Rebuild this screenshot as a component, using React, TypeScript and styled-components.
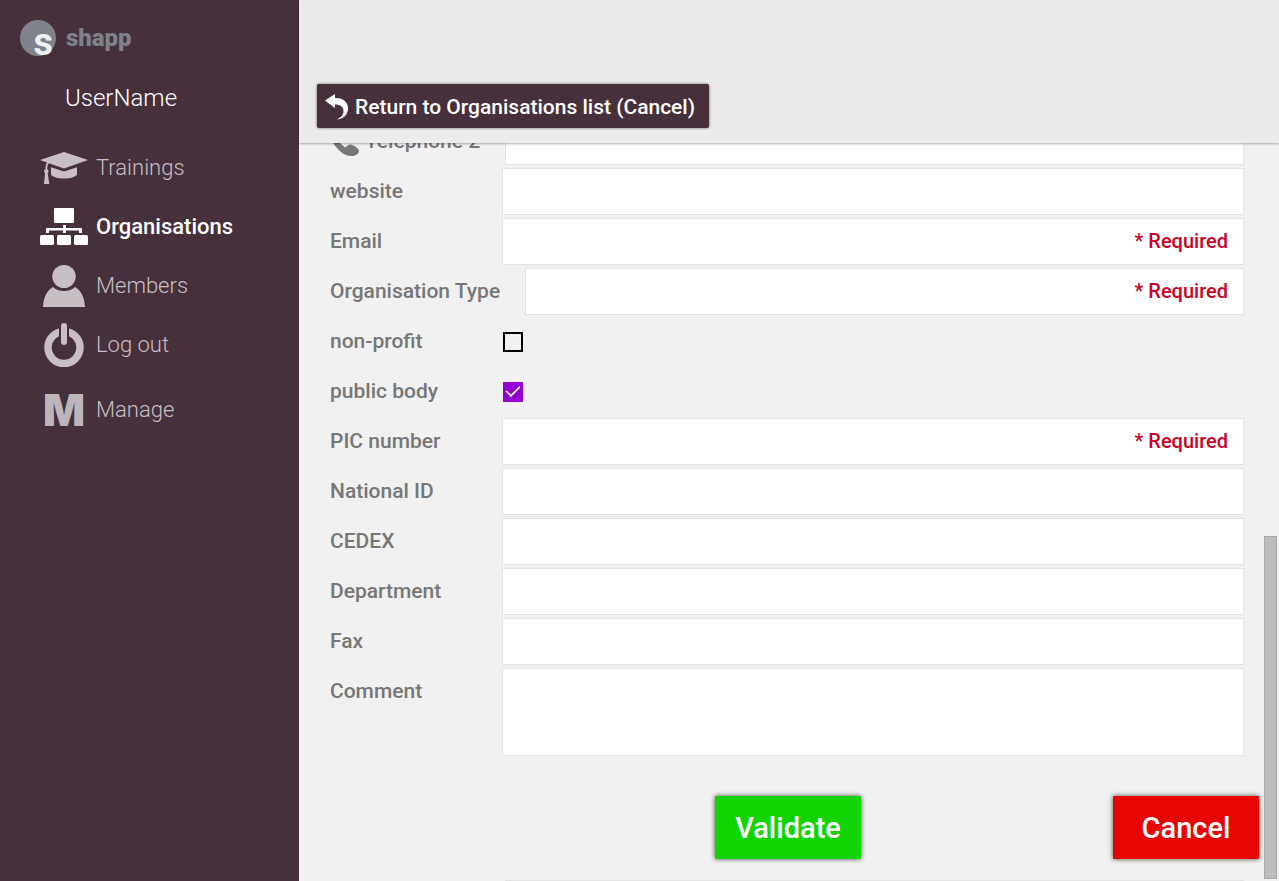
import React, { useLayoutEffect, useRef } from "react";
import styled, { createGlobalStyle } from "styled-components";

const GlobalStyle = createGlobalStyle`
  *, *::before, *::after { box-sizing: border-box; }
  body { margin: 0; font-family: Roboto, "Liberation Sans", sans-serif; }
`;

const Page = styled.div`
  display: flex;
  height: 100vh;
  background: #f1f1f1;
`;

const Sidebar = styled.aside`
  flex: 0 0 299px;
  padding-top: 20px;
  background: #46303b;
`;

const Brand = styled.a`
  display: flex;
  align-items: center;
  gap: 10px;
  height: 36px;
  padding-left: 20px;
  color: #7f8189;
  font-size: 24px;
  font-weight: 900;
  line-height: 32px;
  text-decoration: none;
`;

const BrandMark = styled.span`
  display: flex;
  align-items: flex-end;
  justify-content: flex-end;
  width: 36px;
  height: 36px;
  padding-right: 3px;
  border-radius: 50%;
  background: #80838c;
  color: #eef0f3;
  font-size: 38px;
  font-weight: 700;
  line-height: 28px;
`;

const UserName = styled.p`
  margin: 26px 0 24px 65px;
  color: #ffffff;
  font-size: 24px;
  font-weight: 300;
  line-height: 32px;
`;

const NavGroup = styled.ul`
  margin: 0 0 6px;
  padding: 0 0 0 40px;
  list-style: none;
`;

const NavLink = styled.a<{ $active?: boolean }>`
  display: flex;
  align-items: center;
  gap: 8px;
  height: 59px;
  color: ${(p) => (p.$active ? "#ffffff" : "#c7bfc3")};
  font-size: 22px;
  font-weight: ${(p) => (p.$active ? 500 : 300)};
  text-decoration: none;
`;

const NavIcon = styled.span`
  display: flex;
  justify-content: center;
  flex: 0 0 48px;
`;

const Monogram = styled.span`
  font-family: Inter, Roboto, sans-serif;
  font-size: 44px;
  font-weight: 900;
  line-height: 44px;
  color: #beb5ba;
`;

const Main = styled.main`
  flex: 1;
  min-width: 0;
  display: flex;
  flex-direction: column;
`;

const Header = styled.header`
  flex: 0 0 143px;
  display: flex;
  align-items: flex-end;
  padding: 0 18px 15px;
  background: #ebebeb;
  box-shadow: 0 1px 2px rgba(0, 0, 0, 0.3);
  z-index: 1;
`;

const ReturnButton = styled.button`
  display: flex;
  align-items: center;
  gap: 6px;
  height: 44px;
  padding: 2px 14px 0 8px;
  border: 0;
  border-radius: 2px;
  background: #46303b;
  box-shadow: 0 0 3px rgba(0, 0, 0, 0.6);
  color: #ffffff;
  font: 500 21px/24px Roboto, sans-serif;
`;

const Body = styled.div`
  flex: 1;
  min-height: 0;
  display: flex;
`;

const ScrollArea = styled.div`
  flex: 1;
  min-width: 0;
  overflow: hidden;
`;

const Track = styled.div`
  flex: 0 0 15px;
  display: flex;
  flex-direction: column;
  justify-content: flex-end;
  padding: 0 2px 2px 0;
`;

const Thumb = styled.div`
  height: 46.6%;
  border: 1px solid #a8a8a8;
  background: #bcbcbc;
`;

const Form = styled.form`
  display: flex;
  flex-direction: column;
  gap: 3px;
`;

const Row = styled.div<{ $labelWidth?: number }>`
  display: grid;
  grid-template-columns: ${(p) => p.$labelWidth ?? 172}px 1fr;
  min-height: 47px;
  padding: 0 20px 0 31px;
`;

const Label = styled.label`
  display: flex;
  align-items: center;
  gap: 6px;
  height: 47px;
  padding-bottom: 1px;
  color: #777777;
  font-size: 21px;
  font-weight: 500;
  line-height: 24px;
  white-space: nowrap;
`;

const FieldBox = styled.div`
  display: flex;
  align-items: center;
  border: 1px solid #e3e3e3;
  background: #ffffff;
`;

const Input = styled.input`
  flex: 1;
  min-width: 0;
  align-self: stretch;
  padding: 0 12px;
  border: 0;
  outline: 0;
  background: transparent;
  font: 400 20px/24px Roboto, sans-serif;
`;

const Required = styled.span`
  padding: 0 15px 1px 0;
  color: #cc0026;
  font-size: 20px;
  font-weight: 500;
  line-height: 24px;
`;

const TextArea = styled.textarea`
  height: 88px;
  padding: 12px;
  border: 1px solid #e3e3e3;
  outline: 0;
  resize: none;
  background: #ffffff;
  font: 400 20px/24px Roboto, sans-serif;
`;

const Checkbox = styled.input`
  appearance: none;
  align-self: center;
  display: grid;
  place-items: center;
  width: 20px;
  height: 20px;
  margin: 0 0 0 1px;
  border: 2px solid #000000;

  &:checked {
    border-color: #9400d3;
    background: #9400d3;
  }

  &:checked::after {
    content: "";
    width: 16px;
    height: 9px;
    margin-bottom: 5px;
    border: solid #ffffff;
    border-width: 0 0 2px 2px;
    transform: rotate(-45deg) scale(0.85);
  }
`;

const Actions = styled.div`
  display: grid;
  grid-template-columns: 1fr auto 1fr;
  padding: 37px 5px 18px 18px;
`;

const ActionButton = styled.button<{ $tone: "ok" | "danger" }>`
  grid-column: ${(p) => (p.$tone === "ok" ? 2 : 3)};
  justify-self: ${(p) => (p.$tone === "ok" ? "center" : "end")};
  width: 146px;
  height: 63px;
  padding: 0;
  border: 0;
  border-radius: 1px;
  background: ${(p) => (p.$tone === "ok" ? "#12d400" : "#e60500")};
  box-shadow: 0 0 5px rgba(0, 0, 0, 0.7);
  color: #ffffff;
  font: 500 29px/36px Roboto, sans-serif;
`;

const CapIcon = () => (
  <svg width="48" height="32" viewBox="0 0 48 32" fill="currentColor" aria-hidden="true">
    <path d="M24 0 48 8 24 16.500 9 11.300C7.500 12.500 7.200 15 7.200 17c1.800 1 1.600 3.300.5 4.200L9.300 32H4l1-10.800c-1.200-1-1.200-3.200.5-4.200 0-2.500.4-4.800 1.600-6.400L0 8Z" />
    <path d="M11 15.200 24 19.500l13-4.300v7.300c-1.500 2.500-6.500 4-13 4s-11.500-1.500-13-4Z" />
  </svg>
);

const OrgIcon = () => (
  <svg width="48" height="37" viewBox="0 0 48 37" fill="currentColor" aria-hidden="true">
    <rect x="14" y="0" width="20" height="15" rx="1" />
    <path d="M23 17h3v3h16v5h-3v-2.500H26V25h-3v-2.500H9V25H6v-5h17Z" />
    <rect x="0" y="27" width="14" height="10" rx="1.500" />
    <rect x="17" y="27" width="14" height="10" rx="1.500" />
    <rect x="34" y="27" width="14" height="10" rx="1.500" />
  </svg>
);

const MemberIcon = () => (
  <svg width="42" height="42" viewBox="0 0 42 42" fill="currentColor" aria-hidden="true">
    <ellipse cx="21" cy="11.500" rx="11.700" ry="11.500" />
    <path d="M10 22c2.500 2.500 6.500 4 11 4s8.500-1.500 11-4c6 3.500 9.500 10 10 20H0c.5-10 4-16.500 10-20Z" />
  </svg>
);

const PowerIcon = () => (
  <svg width="40" height="44" viewBox="0 0 40 44" fill="none" stroke="currentColor" aria-hidden="true">
    <circle cx="20" cy="24.500" r="16" strokeWidth="7.500" />
    <path d="M20 0v19" stroke="#46303b" strokeWidth="10" />
    <path d="M20 3v16" strokeWidth="6" strokeLinecap="round" />
  </svg>
);

const ReturnIcon = () => (
  <svg width="24" height="26" viewBox="0 0 24 26" fill="currentColor" aria-hidden="true">
    <path d="M0 6.500 10 0v4C18 3.500 23 8 23 14.500c0 6-4 10-11 11 4.500-2.500 6.500-5 6.500-8.500 0-4-3-6.500-8.500-6.500v3.500Z" />
  </svg>
);

const PhoneIcon = () => (
  <svg width="29" height="29" viewBox="0 0 29 29" fill="currentColor" aria-hidden="true">
    <path d="M5 0c3 0 5.500 5.500 5 7.500-.5 1.500-3 2-2.500 4C8.500 14.500 11 17.500 14.500 20 16.500 21 17.500 17.500 20 17.500c4 .5 9 4 9 6.500 0 3-4 5-8 5C11 29 0 15 0 6.500 0 3 2 0 5 0Z" />
  </svg>
);

type FieldProps = {
  id: string;
  label: string;
  required?: boolean;
  labelWidth?: number;
  icon?: React.ReactNode;
};

const Field = ({ id, label, required, labelWidth, icon }: FieldProps) => (
  <Row $labelWidth={labelWidth}>
    <Label htmlFor={id}>
      {icon}
      {label}
    </Label>
    <FieldBox>
      <Input id={id} type="text" required={required} />
      {required && <Required>* Required</Required>}
    </FieldBox>
  </Row>
);

const CheckField = ({ id, label, checked }: { id: string; label: string; checked?: boolean }) => (
  <Row>
    <Label htmlFor={id}>{label}</Label>
    <Checkbox id={id} type="checkbox" defaultChecked={checked} />
  </Row>
);

export default function App() {
  const scroller = useRef<HTMLDivElement>(null);

  // Open on the second half of the form, with the phone row partly scrolled away.
  useLayoutEffect(() => {
    if (scroller.current) scroller.current.scrollTop = 25;
  }, []);

  return (
    <>
      <GlobalStyle />
      <Page>
        <Sidebar>
          <Brand href="#">
            <BrandMark aria-hidden="true">s</BrandMark>
            shapp
          </Brand>
          <UserName>UserName</UserName>
          <nav>
            <NavGroup>
              <li><NavLink href="#trainings"><NavIcon><CapIcon /></NavIcon>Trainings</NavLink></li>
              <li><NavLink href="#organisations" $active><NavIcon><OrgIcon /></NavIcon>Organisations</NavLink></li>
              <li><NavLink href="#members"><NavIcon><MemberIcon /></NavIcon>Members</NavLink></li>
              <li><NavLink href="#logout"><NavIcon><PowerIcon /></NavIcon>Log out</NavLink></li>
            </NavGroup>
            <NavGroup>
              <li><NavLink href="#manage"><NavIcon><Monogram aria-hidden="true">M</Monogram></NavIcon>Manage</NavLink></li>
            </NavGroup>
          </nav>
        </Sidebar>
        <Main>
          <Header>
            <ReturnButton type="button"><ReturnIcon />Return to Organisations list (Cancel)</ReturnButton>
          </Header>
          <Body>
            <ScrollArea ref={scroller}>
              <Form>
                <Field id="telephone2" label="Telephone 2" labelWidth={175} icon={<PhoneIcon />} />
                <Field id="website" label="website" />
                <Field id="email" label="Email" required />
                <Field id="orgType" label="Organisation Type" labelWidth={195} required />
                <CheckField id="nonProfit" label="non-profit" />
                <CheckField id="publicBody" label="public body" checked />
                <Field id="pic" label="PIC number" required />
                <Field id="nationalId" label="National ID" />
                <Field id="cedex" label="CEDEX" />
                <Field id="department" label="Department" />
                <Field id="fax" label="Fax" />
                <Row>
                  <Label htmlFor="comment">Comment</Label>
                  <TextArea id="comment" />
                </Row>
                <Actions>
                  <ActionButton type="button" $tone="ok">Validate</ActionButton>
                  <ActionButton type="button" $tone="danger">Cancel</ActionButton>
                </Actions>
                <Row $labelWidth={175}>
                  <span />
                  <FieldBox><Input type="text" aria-label="Additional information" /></FieldBox>
                </Row>
              </Form>
            </ScrollArea>
            <Track>
              <Thumb />
            </Track>
          </Body>
        </Main>
      </Page>
    </>
  );
}
